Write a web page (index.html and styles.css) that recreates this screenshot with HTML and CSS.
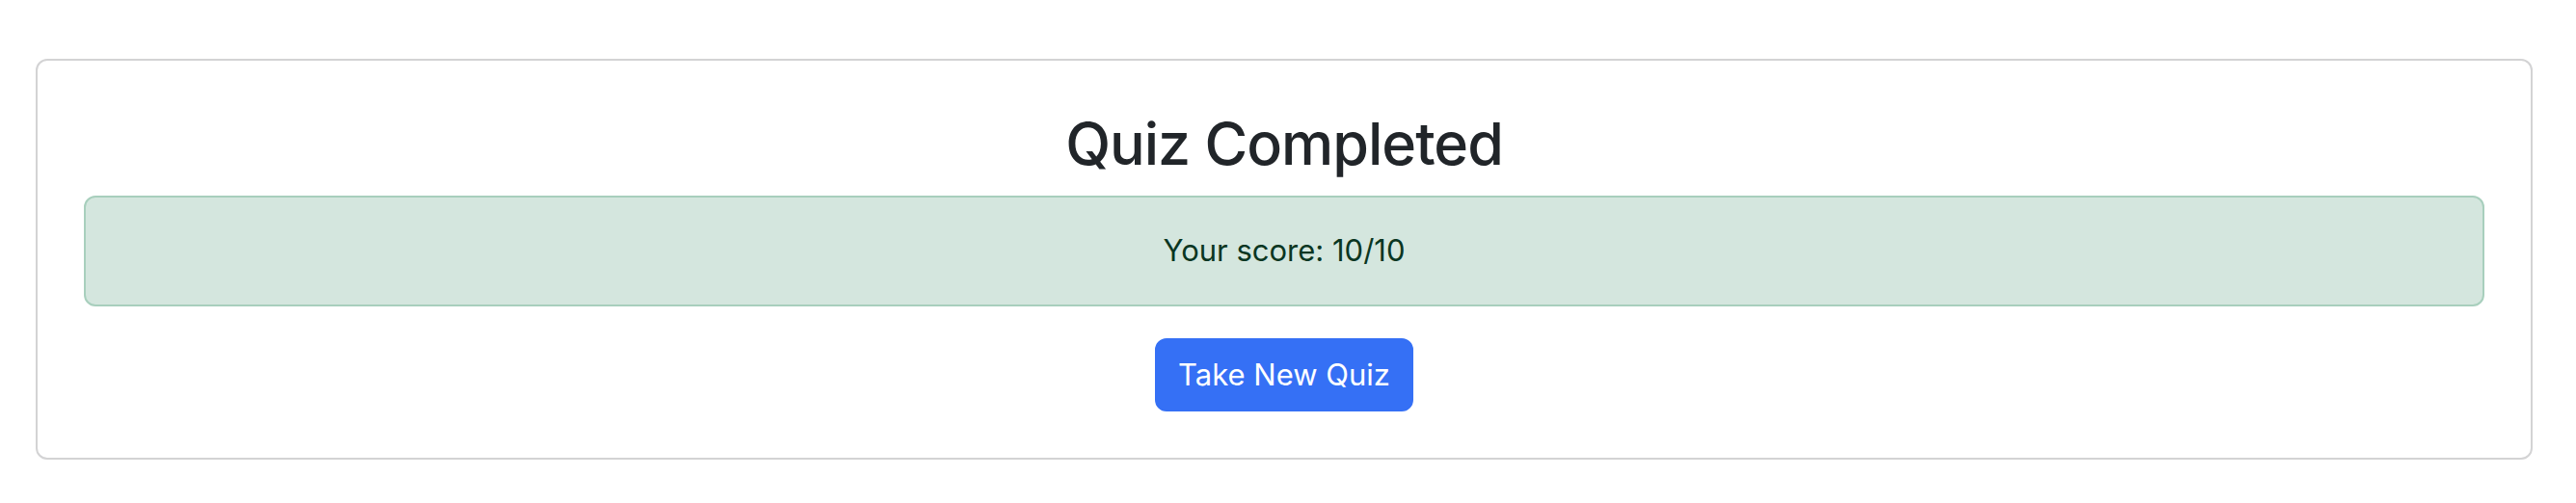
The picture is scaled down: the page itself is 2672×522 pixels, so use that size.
FILE: index.html
```html
<!DOCTYPE html>
<html lang="en">
<head>
<meta charset="utf-8">
<title>Quiz Completed</title>
<link rel="stylesheet" href="styles.css">
</head>
<body>
<main class="page">
  <section class="card">
    <h2 class="card-title">Quiz Completed</h2>
    <div class="alert">Your score: 10/10</div>
    <div class="actions">
      <button class="btn" type="button">Take New Quiz</button>
    </div>
  </section>
</main>
</body>
</html>
```

FILE: styles.css
```css
* { box-sizing: border-box; }
html, body { margin: 0; padding: 0; background: #ffffff; }
body {
  font-family: Inter, "Noto Sans", "Liberation Sans", sans-serif;
  color: #212529;
}
.page {
  padding: 61px 45px 30px 37px;
}
.card {
  border: 2px solid #d3d3d4;
  border-radius: 12px;
  padding: 48px 48px;
  text-align: center;
}
.card-title {
  margin: 0 0 16px;
  font-size: 61px;
  line-height: 76px;
  font-weight: 500;
  letter-spacing: -1px;
  color: #212529;
}
.alert {
  background: #d4e6de;
  border: 2px solid #a8cfbd;
  border-radius: 12px;
  color: #0a3622;
  font-size: 31px;
  line-height: 48px;
  padding: 31px 32px 32px;
  margin: 0 0 33px;
}
.actions { display: flex; justify-content: center; }
.btn {
  font-family: inherit;
  background: #3570f5;
  color: #ffffff;
  border: 2px solid #3570f5;
  border-radius: 12px;
  font-size: 31px;
  line-height: 48px;
  padding: 12px 22px;
  height: 76px;
  cursor: pointer;
}
```
